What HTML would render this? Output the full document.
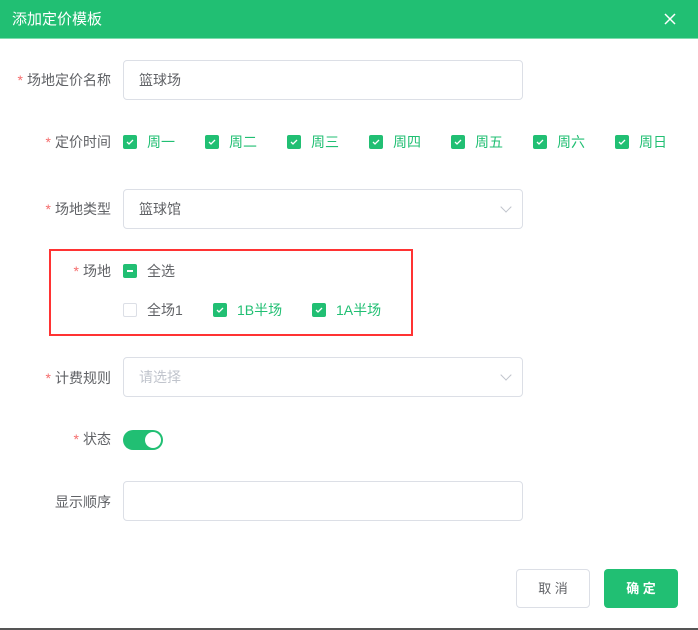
<!DOCTYPE html><html><head><meta charset="utf-8"><style>
*{box-sizing:border-box;margin:0;padding:0}
body{width:698px;height:630px;background:#fff;font-family:"Liberation Sans","Noto Sans CJK SC",sans-serif;font-size:14px;color:#606266;position:relative;overflow:hidden}
.hd{position:absolute;left:0;top:0;width:698px;height:39px;background:#21bf73;color:#fff;font-size:15px;line-height:39px;padding-left:12px;border-bottom:1px solid #7ddcae}
.x{position:absolute;left:664px;top:13px}
.a{position:absolute;white-space:nowrap}
.lbl{position:absolute;right:587px;white-space:nowrap;line-height:20px}
.lbl b{color:#f56c6c;font-weight:normal;margin-right:4px}
.in{position:absolute;left:123px;width:400px;height:40px;border:1px solid #dcdfe6;border-radius:4px;padding-left:15px;line-height:38px}
.cb{position:absolute;width:14px;height:14px;border-radius:2px;background:#21bf73}
.cb svg{position:absolute;left:0;top:0}
.g{color:#21bf73}
.arr{position:absolute;right:12px;top:13px;width:8px;height:8px;border-right:1px solid #c0c4cc;border-bottom:1px solid #c0c4cc;transform:rotate(45deg)}
</style></head><body>
<div class="hd">添加定价模板<svg class="x" width="12" height="12"><path d="M1 1L11 11M11 1L1 11" stroke="#fff" stroke-width="1.5"/></svg></div>

<div class="lbl" style="top:70px"><b>*</b>场地定价名称</div>
<div class="in" style="top:60px">篮球场</div>

<div class="lbl" style="top:132px"><b>*</b>定价时间</div>

<div class="lbl" style="top:199px"><b>*</b>场地类型</div>
<div class="in" style="top:189px">篮球馆<span class="arr"></span></div>

<div class="a" style="left:49px;top:249px;width:364px;height:87px;border:2px solid #f33"></div>
<div class="lbl" style="top:261px"><b>*</b>场地</div>
<div class="cb" style="left:123px;top:264px"><div style="position:absolute;left:4px;top:6px;width:6px;height:2px;background:#fff"></div></div>
<div class="a" style="left:147px;top:261px;line-height:20px">全选</div>
<div class="cb" style="left:123px;top:303px;background:#fff;border:1px solid #dcdfe6"></div>
<div class="a" style="left:147px;top:300px;line-height:20px">全场1</div>
<div class="cb" style="left:213px;top:303px"><svg width="14" height="14"><path d="M4 7l2 2 4-4" stroke="#fff" stroke-width="1.3" fill="none"/></svg></div>
<div class="a g" style="left:237px;top:300px;line-height:20px">1B半场</div>
<div class="cb" style="left:312px;top:303px"><svg width="14" height="14"><path d="M4 7l2 2 4-4" stroke="#fff" stroke-width="1.3" fill="none"/></svg></div>
<div class="a g" style="left:336px;top:300px;line-height:20px">1A半场</div>

<div class="lbl" style="top:368px"><b>*</b>计费规则</div>
<div class="in" style="top:357px;color:#c0c4cc">请选择<span class="arr"></span></div>

<div class="lbl" style="top:429px"><b>*</b>状态</div>
<div class="a" style="left:123px;top:430px;width:40px;height:20px;border-radius:10px;background:#21bf73"><div style="position:absolute;right:2px;top:2px;width:16px;height:16px;border-radius:50%;background:#fff"></div></div>

<div class="lbl" style="top:492px">显示顺序</div>
<div class="in" style="top:481px"></div>

<div class="a" style="left:516px;top:569px;width:74px;height:39px;border:1px solid #dcdfe6;border-radius:4px;text-align:center;line-height:37px;color:#606266;font-size:13px">取 消</div>
<div class="a" style="left:604px;top:569px;width:74px;height:39px;background:#21bf73;border-radius:4px;text-align:center;line-height:39px;color:#fff;font-size:13px;font-weight:bold">确 定</div>
<div class="a" style="left:0;top:628px;width:698px;height:2px;background:#555"></div>

<div class="cb" style="left:123px;top:135px"><svg width="14" height="14"><path d="M4 7l2 2 4-4" stroke="#fff" stroke-width="1.3" fill="none"/></svg></div><div class="a g" style="left:147px;top:132px;line-height:20px">周一</div>
<div class="cb" style="left:205px;top:135px"><svg width="14" height="14"><path d="M4 7l2 2 4-4" stroke="#fff" stroke-width="1.3" fill="none"/></svg></div><div class="a g" style="left:229px;top:132px;line-height:20px">周二</div>
<div class="cb" style="left:287px;top:135px"><svg width="14" height="14"><path d="M4 7l2 2 4-4" stroke="#fff" stroke-width="1.3" fill="none"/></svg></div><div class="a g" style="left:311px;top:132px;line-height:20px">周三</div>
<div class="cb" style="left:369px;top:135px"><svg width="14" height="14"><path d="M4 7l2 2 4-4" stroke="#fff" stroke-width="1.3" fill="none"/></svg></div><div class="a g" style="left:393px;top:132px;line-height:20px">周四</div>
<div class="cb" style="left:451px;top:135px"><svg width="14" height="14"><path d="M4 7l2 2 4-4" stroke="#fff" stroke-width="1.3" fill="none"/></svg></div><div class="a g" style="left:475px;top:132px;line-height:20px">周五</div>
<div class="cb" style="left:533px;top:135px"><svg width="14" height="14"><path d="M4 7l2 2 4-4" stroke="#fff" stroke-width="1.3" fill="none"/></svg></div><div class="a g" style="left:557px;top:132px;line-height:20px">周六</div>
<div class="cb" style="left:615px;top:135px"><svg width="14" height="14"><path d="M4 7l2 2 4-4" stroke="#fff" stroke-width="1.3" fill="none"/></svg></div><div class="a g" style="left:639px;top:132px;line-height:20px">周日</div>
</body></html>
